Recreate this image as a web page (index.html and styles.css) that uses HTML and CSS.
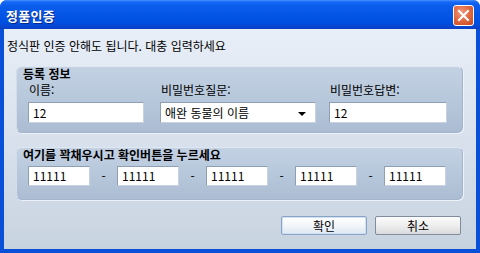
FILE: index.html
```html
<!DOCTYPE html>
<html lang="ko">
<head>
<meta charset="utf-8">
<link rel="stylesheet" href="styles.css">
</head>
<body>
<div class="window">
  <div class="titlebar">
    <span class="title">정품인증</span>
    <span class="close">
      <svg width="13" height="13" viewBox="0 0 13 13"><path d="M2 2 L11 11 M11 2 L2 11" stroke="#fff" stroke-width="2" stroke-linecap="square"/></svg>
    </span>
  </div>
  <div class="client">
    <div class="intro">정식판 인증 안해도 됩니다. 대충 입력하세요</div>
    <div class="group g1">
      <div class="legend">등록 정보</div>
      <div class="fields">
        <div class="field f-name">
          <div class="label">이름:</div>
          <div class="input">12</div>
        </div>
        <div class="field f-q">
          <div class="label">비밀번호질문:</div>
          <div class="input select"><span>애완 동물의 이름</span><span class="arrow"></span></div>
        </div>
        <div class="field f-a">
          <div class="label">비밀번호답변:</div>
          <div class="input">12</div>
        </div>
      </div>
    </div>
    <div class="group g2">
      <div class="legend">여기를 꽉채우시고 확인버튼을 누르세요</div>
      <div class="serial">
        <div class="input s">11111</div><span class="dash">-</span>
        <div class="input s">11111</div><span class="dash">-</span>
        <div class="input s">11111</div><span class="dash">-</span>
        <div class="input s">11111</div><span class="dash">-</span>
        <div class="input s">11111</div>
      </div>
    </div>
    <div class="buttons">
      <div class="btn default">확인</div>
      <div class="btn">취소</div>
    </div>
  </div>
</div>
</body>
</html>
```
FILE: styles.css
```css
* { box-sizing: border-box; }
html, body { margin: 0; padding: 0; }
body {
  font-family: "Noto Sans CJK KR", "Noto Sans", sans-serif;
  font-size: 12px;
  color: #000;
  background: #fff;
}
.window {
  width: 480px;
  height: 253px;
  display: flex;
  flex-direction: column;
  background: #0a4fd8;
  border-radius: 7px 7px 0 0;
  overflow: hidden;
}
.titlebar {
  height: 29px;
  flex: none;
  display: flex;
  align-items: center;
  justify-content: space-between;
  padding: 0 6px 0 6px;
  background: linear-gradient(#4a90ff 0, #1468f4 2px, #0a5deb 6px, #0556e6 14px, #0050e2 22px, #0a46cf 27px, #0a3fc2 29px);
}
.title {
  color: #fff;
  font-weight: bold;
  font-size: 13px;
  letter-spacing: 0.3px;
  text-shadow: 1px 1px 0 #0a2a8a;
  margin-top: 1px;
}
.close {
  width: 21px;
  height: 21px;
  border: 1px solid #fff;
  border-radius: 3px;
  background: radial-gradient(circle at 40% 35%, #f09a7c 0, #e0683f 50%, #c4461f 100%);
  display: flex;
  align-items: center;
  justify-content: center;
  margin-top: 1px;
}
.client {
  flex: 1;
  margin: 0 4px 4px 4px;
  background: linear-gradient(#e8eef7 0, #dbe4ef 40%, #c8d3e0 100%);
  padding: 10px 0 0 0;
  display: flex;
  flex-direction: column;
}
.intro {
  line-height: 14px;
  height: 14px;
  padding-left: 3px;
}
.group {
  margin-left: 12px;
  width: 447px;
  border-radius: 6px;
  background: linear-gradient(#c3d1e3 0, #b5c6da 60%, #abbcd3 100%);
  border: 1px solid #a4b6cd;
  border-top-color: #dfe7f1;
  border-left-color: #d2dcea;
  box-shadow: 1px 1px 0 #eef2f8;
  padding-left: 11px;
}
.legend {
  font-weight: bold;
  line-height: 14px;
  height: 14px;
  margin-left: -5px;
}
.g1 {
  margin-top: 13px;
  height: 67px;
  padding-top: 0;
}
.fields {
  display: flex;
  margin-top: 2px;
}
.field .label {
  line-height: 14px;
  height: 14px;
  padding-left: 1px;
  margin-bottom: 5px;
}
.f-name { width: 116px; }
.f-q { width: 156px; margin-left: 16px; }
.f-a { width: 118px; margin-left: 13px; }
.input {
  background: #fff;
  border: 1px solid #8e9fb4;
  border-right-color: #c9d3df;
  border-bottom-color: #c9d3df;
  height: 21px;
  line-height: 19px;
  padding-left: 4px;
}
.select {
  display: flex;
  justify-content: space-between;
  align-items: center;
  padding-right: 9px;
}
.arrow {
  width: 0;
  height: 0;
  border-left: 4px solid transparent;
  border-right: 4px solid transparent;
  border-top: 4px solid #000;
  margin-top: 2px;
}
.g2 {
  margin-top: 14px;
  height: 53px;
}
.serial {
  display: flex;
  align-items: center;
  margin-top: 4px;
}
.input.s {
  width: 62px;
  height: 20px;
  line-height: 18px;
}
.dash {
  width: 27px;
  text-align: center;
  line-height: 18px;
}
.buttons {
  display: flex;
  justify-content: flex-end;
  gap: 8px;
  margin-top: 16px;
  padding-right: 15px;
}
.btn {
  width: 86px;
  height: 19px;
  line-height: 17px;
  text-align: center;
  border: 1px solid #7f8d9c;
  border-radius: 2px;
  background: linear-gradient(#fbfbfb 0, #eeeeee 50%, #d9dadc 100%);
}
.btn.default {
  border-color: #8aa5c4;
  background: linear-gradient(#ffffff 0, #f3f6fa 50%, #dde6f1 100%);
  box-shadow: inset 0 0 0 1px #cfe0f5;
}
```
